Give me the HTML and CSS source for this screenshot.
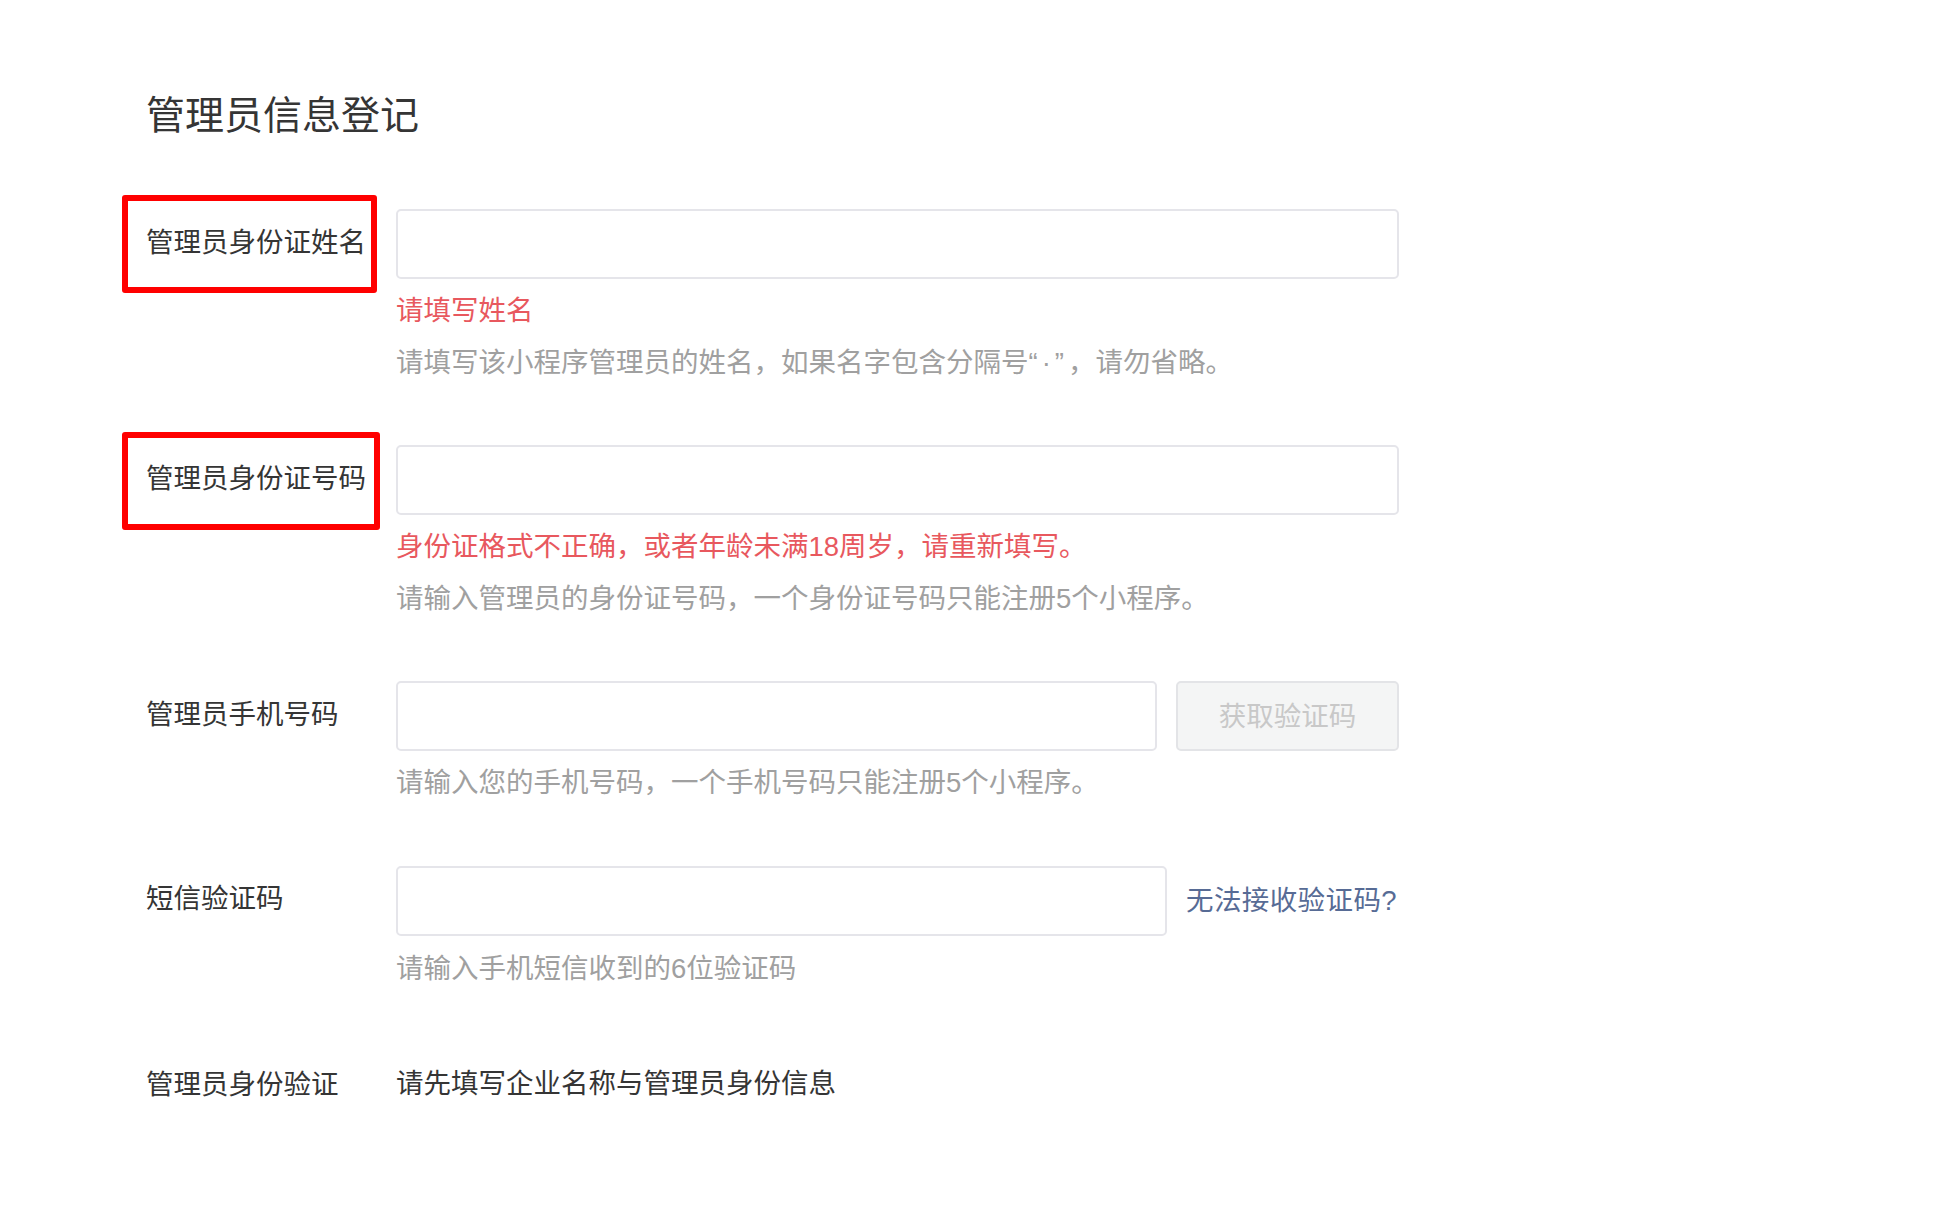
FILE: index.html
```html
<!DOCTYPE html>
<html lang="zh-CN">
<head>
<meta charset="utf-8">
<title>管理员信息登记</title>
<link rel="stylesheet" href="styles.css">
</head>
<body>
<div class="page">
  <h1 class="title">管理员信息登记</h1>

  <div class="row">
    <div class="label marked mark-a">管理员身份证姓名</div>
    <div class="field">
      <div class="input"></div>
      <div class="note error">请填写姓名</div>
      <div class="note help gap">请填写该小程序管理员的姓名，如果名字包含分隔号<span class="quote">“·”</span>，请勿省略。</div>
    </div>
  </div>

  <div class="row">
    <div class="label marked mark-b">管理员身份证号码</div>
    <div class="field">
      <div class="input"></div>
      <div class="note error">身份证格式不正确，或者年龄未满18周岁，请重新填写。</div>
      <div class="note help gap">请输入管理员的身份证号码，一个身份证号码只能注册5个小程序。</div>
    </div>
  </div>

  <div class="row">
    <div class="label">管理员手机号码</div>
    <div class="field">
      <div class="control">
        <div class="input phone"></div>
        <div class="btn">获取验证码</div>
      </div>
      <div class="note help">请输入您的手机号码，一个手机号码只能注册5个小程序。</div>
    </div>
  </div>

  <div class="row">
    <div class="label">短信验证码</div>
    <div class="field">
      <div class="control">
        <div class="input code"></div>
        <a class="link">无法接收验证码?</a>
      </div>
      <div class="note help">请输入手机短信收到的6位验证码</div>
    </div>
  </div>

  <div class="row last">
    <div class="label">管理员身份验证</div>
    <div class="field">
      <div class="plain">请先填写企业名称与管理员身份信息</div>
    </div>
  </div>
</div>
</body>
</html>
```

FILE: styles.css
```css
*, *::before, *::after { box-sizing: border-box; }
html, body { margin: 0; padding: 0; background: #ffffff; }
body {
  font-family: "Liberation Sans", "Noto Sans CJK SC", sans-serif;
  color: #353535;
}
.page {
  padding: 89px 0 0 146px;
}
.title {
  margin: 0 0 66px 0;
  font-size: 39px;
  font-weight: normal;
  line-height: 54px;
  color: #353535;
}
.row {
  display: grid;
  grid-template-columns: 250px 1003px;
  margin-bottom: 60px;
}
.row.last { margin-bottom: 0; }
.label {
  position: relative;
  font-size: 27.5px;
  line-height: 67px;
  white-space: nowrap;
}
.marked::before {
  content: "";
  position: absolute;
  border: 6px solid #ff0000;
  border-radius: 3px;
}
.mark-a::before { left: -24px; top: -14px; width: 255px; height: 98px; }
.mark-b::before { left: -24px; top: -13px; width: 258px; height: 98px; }
.field { display: flex; flex-direction: column; }
.control { display: flex; align-items: center; gap: 19px; }
.input {
  height: 70px;
  border: 2px solid #e5e5ea;
  border-radius: 5px;
  background: #fff;
}
.input.phone { width: 761px; }
.input.code { width: 771px; }
.btn {
  flex: 1;
  height: 70px;
  border: 2px solid #e3e4e7;
  border-radius: 5px;
  background: #f4f5f5;
  color: #c8c8c8;
  font-size: 27.5px;
  line-height: 68px;
  text-align: center;
}
.link {
  color: #576b95;
  font-size: 27.5px;
  line-height: 72px;
  white-space: nowrap;
  letter-spacing: 0.4px;
}
.note {
  font-size: 27.5px;
  line-height: 44px;
  margin-top: 10px;
  white-space: nowrap;
}
.note.gap { margin-top: 8px; }
.quote { letter-spacing: 4px; }
.error { color: #e8585e; }
.help { color: #a0a0a0; }
.plain {
  font-size: 27.5px;
  line-height: 66px;
  color: #353535;
  white-space: nowrap;
}
```
